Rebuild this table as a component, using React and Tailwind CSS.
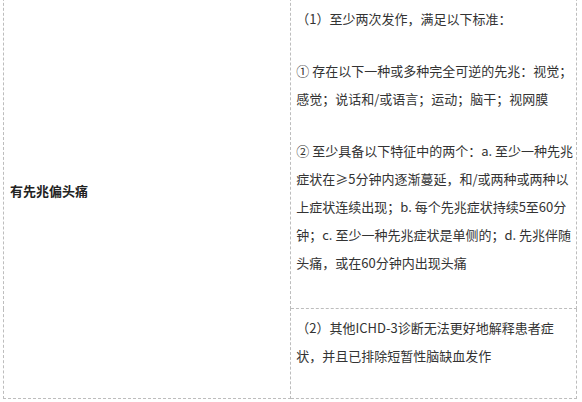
import React from "react";

const cellText = "text-[13px] leading-[28px] text-[#333]";

const criteriaB = [
  "② 至少具备以下特征中的两个：a. 至少一种先兆",
  "症状在≥5分钟内逐渐蔓延，和/或两种或两种以",
  "上症状连续出现；b. 每个先兆症状持续5至60分",
  "钟；c. 至少一种先兆症状是单侧的；d. 先兆伴随",
  "头痛，或在60分钟内出现头痛",
];

export default function App() {
  return (
    <div
      className="w-[582px] h-[402px] overflow-hidden bg-white pl-[3px]"
      style={{ fontFamily: '"Microsoft YaHei", "Noto Sans CJK SC", "Noto Sans", sans-serif' }}
    >
      {/* the screenshot is scrolled: table top sits above the view */}
      <table className="-mt-[22px] w-[574px] border-collapse">
        <tbody>
          <tr>
            <td
              rowSpan={2}
              className="w-[288px] border border-dashed border-[#bdbdbd] pl-[6px] align-middle"
            >
              <span className="text-[13px] font-bold text-[#222]">有先兆偏头痛</span>
            </td>
            <td className={`border border-dashed border-[#bdbdbd] pl-[5px] pr-[3px] pt-[26px] pb-[31px] align-top ${cellText}`}>
              <p>（1）至少两次发作，满足以下标准：</p>
              <p className="mt-[24px]">① 存在以下一种或多种完全可逆的先兆：视觉；感觉；说话和/或语言；运动；脑干；视网膜</p>
              <p className="mt-[24px] whitespace-nowrap">
                {criteriaB.map((line, i) => (
                  <span key={i} className="block">{line}</span>
                ))}
              </p>
            </td>
          </tr>
          <tr>
            <td className={`border border-dashed border-[#bdbdbd] pl-[5px] pr-[3px] pt-[5px] pb-[28px] align-top ${cellText}`}>
              <p>（2）其他ICHD-3诊断无法更好地解释患者症状，并且已排除短暂性脑缺血发作</p>
            </td>
          </tr>
        </tbody>
      </table>
    </div>
  );
}
